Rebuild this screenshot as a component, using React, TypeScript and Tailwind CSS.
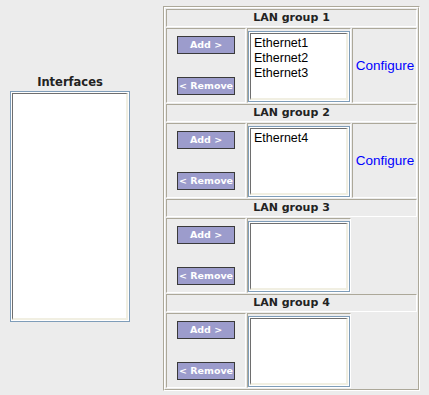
import React from 'react';

const groups = [
  { name: 'LAN group 1', items: ['Ethernet1', 'Ethernet2', 'Ethernet3'], configure: true },
  { name: 'LAN group 2', items: ['Ethernet4'], configure: true },
  { name: 'LAN group 3', items: [], configure: false },
  { name: 'LAN group 4', items: [], configure: false },
];

const cell = 'border border-t-[#aca899] border-l-[#aca899] border-b-white border-r-white';

function ListBox({ items, className }: { items: string[]; className: string }) {
  return (
    <div className={`border border-[#7f9db9] bg-white p-px ${className}`}>
      <div className="h-full border-2 border-t-[#6e6e6e] border-l-[#6e6e6e] border-b-[#f1efe2] border-r-[#f1efe2] border-t-[1.5px] border-l-[1.5px] px-[3px] pt-[2px]">
        {items.map((it) => (
          <div key={it} className="text-[12.5px] leading-[15px] text-black [font-family:'Liberation_Sans',Arial,sans-serif]">
            {it}
          </div>
        ))}
      </div>
    </div>
  );
}

function Btn({ label }: { label: string }) {
  return (
    <button className="w-[58px] h-[18px] bg-[#9c9ccc] border border-[#3a3a3a] text-white font-bold text-[9.5px] leading-none [font-family:'DejaVu_Sans',Verdana,sans-serif]">
      {label}
    </button>
  );
}

export default function App() {
  return (
    <div className="w-[429px] h-[395px] bg-[#ececec] flex items-center pt-[2px]">
      <div className="w-[163px] pl-[10px] flex">
        <div className="w-[120px] flex flex-col items-center">
          <div className="text-[11.5px] font-bold leading-[15px] text-[#222] mb-[1px] [font-family:'DejaVu_Sans',Verdana,sans-serif]">
            Interfaces
          </div>
          <ListBox items={[]} className="w-[120px] h-[231px]" />
        </div>
      </div>

      <div className="w-[257px] border border-t-[#aca899] border-l-[#aca899] border-b-white border-r-white">
        <div className="border border-t-white border-l-white border-b-[#aca899] border-r-[#aca899] p-px flex flex-col gap-px">
          {groups.map((g) => (
            <React.Fragment key={g.name}>
              <div className={`${cell} h-[18px] flex items-center justify-center pt-px text-[11px] font-bold text-[#222] [font-family:'DejaVu_Sans',Verdana,sans-serif]`}>
                {g.name}
              </div>
              <div className="h-[75px] flex gap-px">
                <div className={`${cell} w-[80px] flex flex-col items-center justify-between py-[7px]`}>
                  <Btn label="Add >" />
                  <Btn label="< Remove" />
                </div>
                <div className={`${cell} w-[104px] flex justify-center pt-[2px]`}>
                  <ListBox items={g.items} className="w-[102px] h-[71px]" />
                </div>
                {g.configure ? (
                  <div className={`${cell} flex-1 flex items-center justify-center pt-[2px] pl-px`}>
                    <span className="text-[13.5px] text-[#0000ff] [font-family:'Liberation_Sans',Arial,sans-serif]">
                      Configure
                    </span>
                  </div>
                ) : (
                  <div className="flex-1" />
                )}
              </div>
            </React.Fragment>
          ))}
        </div>
      </div>
    </div>
  );
}
